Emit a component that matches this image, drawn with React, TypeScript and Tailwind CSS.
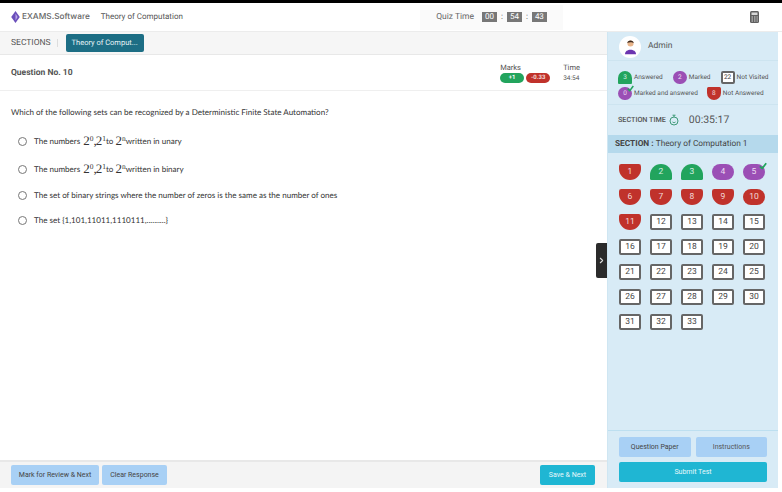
import { ChevronRight } from "lucide-react";

type Status = "notAnswered" | "answered" | "marked" | "markedAnswered" | "notVisited";

const shapes: Record<Status, string> = {
  notAnswered: "bg-[#c0322b] text-[#f3d9d7] rounded-t-[3px] rounded-b-[14px]",
  answered: "bg-[#22a45d] text-[#d8f0e3] rounded-t-[14px] rounded-b-[2px]",
  marked: "bg-[#9b4fb5] text-[#eedff3] rounded-full",
  markedAnswered: "bg-[#9b4fb5] text-[#eedff3] rounded-full",
  notVisited: "bg-white text-[#444] border-2 border-[#666] rounded-[2px]",
};

const questions: Status[] = [
  "notAnswered", "answered", "answered", "marked", "markedAnswered",
  "notAnswered", "notAnswered", "notAnswered", "notAnswered", "notAnswered",
  "notAnswered",
  ...Array<Status>(22).fill("notVisited"),
];

function Check({ className }: { className: string }) {
  return (
    <svg viewBox="0 0 10 10" className={className}>
      <path d="M1 5.5 L4 8 L9 1.5" fill="none" stroke="#22a45d" strokeWidth="2.2" />
    </svg>
  );
}

function QuestionButton({ n, status }: { n: number; status: Status }) {
  const tenth = n === 10;
  return (
    <div
      className={`relative flex h-4 w-[22px] items-center justify-center text-[8.5px] ${
        tenth ? "bg-[#c0322b] text-[#f3d9d7] rounded-full" : shapes[status]
      }`}
    >
      {n}
      {status === "markedAnswered" && <Check className="absolute -right-0.5 -top-0.5 h-2 w-2" />}
    </div>
  );
}

function Legend({ status, n, label }: { status: Status; n: number; label: string }) {
  return (
    <div className="flex items-center gap-[1px]">
      <div
        className={`relative flex h-[13px] w-[14px] items-center justify-center text-[6.5px] ${shapes[status]} ${
          status === "notVisited" ? "border" : ""
        }`}
      >
        {n}
        {status === "markedAnswered" && <Check className="absolute -right-0.5 -top-0.5 h-[7px] w-[7px]" />}
      </div>
      <span className="ml-[1px] text-[6.5px] text-[#555]">{label}</span>
    </div>
  );
}

function Two({ sup }: { sup: string }) {
  return (
    <span className="font-['Liberation_Serif',serif] text-[13px] leading-[14px] text-[#333]">
      2<sup className="-top-[4px] text-[7.5px]">{sup}</sup>
    </span>
  );
}

function Formula() {
  return (
    <span className="ml-[3px] inline-flex items-baseline font-['Liberation_Serif',serif] text-[13px] leading-[14px] text-[#333]">
      <Two sup="0" />
      <span className="mr-[-1px]">,</span>
      <Two sup="1" />
    </span>
  );
}

function Option({ children, className = "" }: { children: React.ReactNode; className?: string }) {
  return (
    <div className={`flex h-[14px] items-center gap-[7px] ${className}`}>
      <span className="h-[9px] w-[9px] rounded-full border border-[#777] bg-white" />
      <span className="flex items-center whitespace-nowrap font-['Lato',sans-serif] text-[8.05px] text-[#333]">
        {children}
      </span>
    </div>
  );
}

function Clock({ value }: { value: string }) {
  return <span className="bg-[#777] px-[3px] text-[8px] leading-[10px] text-white">{value}</span>;
}

function FooterButton({ label, className }: { label: string; className: string }) {
  return (
    <button className={`flex items-center justify-center rounded-[2px] text-[7px] ${className}`}>{label}</button>
  );
}

export default function App() {
  return (
    <div className="flex h-[492px] w-[782px] flex-col overflow-hidden bg-white font-['Roboto',sans-serif] text-[#444] [text-rendering:geometricPrecision]">
      <div className="h-[3px] w-full shrink-0 bg-black" />

      {/* top header */}
      <div className="flex h-[29px] shrink-0 items-center border-b border-[#ececec] pl-[10px] pr-[23px]">
        <div className="flex w-[410px] shrink-0 items-center">
          <svg viewBox="0 0 12 14" className="h-[12px] w-[11px]">
            <path d="M6 0 L11 7 L6 14 L1 7 Z" fill="#6b4fbb" />
            <path d="M6 3 L8.5 7 L6 11" fill="#b9a6e6" />
          </svg>
          <span className="ml-[1px] font-['Inter',sans-serif] text-[8.3px] font-medium text-[#666]">EXAMS.Software</span>
          <span className="ml-[11px] text-[8px] text-[#555]">Theory of Computation</span>
        </div>
        <div className="flex h-[25px] w-[143px] items-center justify-center gap-[2px] bg-[#fafafa]">
          <span className="mr-[6px] text-[8.5px] text-[#666]">Quiz Time</span>
          <Clock value="00" />
          <span className="mx-[2px] text-[8px]">:</span>
          <Clock value="54" />
          <span className="mx-[2px] text-[8px]">:</span>
          <Clock value="43" />
        </div>
        <svg viewBox="0 0 9 12" className="ml-auto h-[12px] w-[9px]">
          <rect width="9" height="12" rx="1.5" fill="#5f5f5f" />
          <rect x="1.5" y="1.5" width="6" height="2.5" fill="#d8d8d8" />
          <path d="M1.5 6 H3 M4 6 H5.5 M6.5 6 H7.8 M1.5 8 H3 M4 8 H5.5 M6.5 8 H7.8 M1.5 10 H3 M4 10 H5.5 M6.5 10 H7.8" stroke="#d8d8d8" strokeWidth="1" />
        </svg>
      </div>

      <div className="flex min-h-0 flex-1 pr-1">
        {/* left column */}
        <div className="flex min-w-0 flex-1 flex-col">
          <div className="flex h-[23px] shrink-0 items-center border-b border-[#e8e8e8] bg-[#f6f6f6] pl-[11px]">
            <span className="text-[8.5px] text-[#555]">SECTIONS</span>
            <span className="ml-[6px] h-[8px] w-px bg-[#ddd]" />
            <span className="ml-[8px] flex h-[18px] w-[78px] items-center justify-center rounded-[2px] bg-[#1d6e85] text-[7.5px] text-[#e8f4f7]">
              Theory of Comput...
            </span>
          </div>

          <div className="flex h-[36px] shrink-0 items-center border-b border-[#efefef] pl-[11px] pr-[27px]">
            <span className="mt-[2px] text-[8.5px] font-bold text-[#555]">Question No. 10</span>
            <div className="ml-auto flex flex-col">
              <span className="text-[7.5px] leading-[10px] text-[#555]">Marks</span>
              <div className="flex gap-[2px]">
                <span className="flex h-[10px] w-[24px] items-center justify-center rounded-full bg-[#22a45d] text-[6px] font-bold text-white">+1</span>
                <span className="flex h-[10px] w-[24px] items-center justify-center rounded-full bg-[#c0322b] text-[6px] font-bold text-[#f3d9d7]">-0.33</span>
              </div>
            </div>
            <div className="ml-[13px] flex flex-col">
              <span className="text-[7.5px] leading-[10px] text-[#555]">Time</span>
              <span className="text-[6.5px] leading-[10px] text-[#555]">34:54</span>
            </div>
          </div>

          <div className="relative min-h-0 flex-1 pl-[11px] pt-[15px]">
            <p className="font-['Lato',sans-serif] text-[8.05px] leading-[12px] text-[#333]">
              Which of the following sets can be recognized by a Deterministic Finite State Automation?
            </p>
            <div className="ml-[7px] mt-[16px] flex flex-col gap-[12px]">
              <Option className="mb-[2px]">
                The numbers <Formula />to&nbsp;<Two sup="n" />written in unary
              </Option>
              <Option>
                The numbers <Formula />to&nbsp;<Two sup="n" />written in binary
              </Option>
              <Option className="-mb-[1px]">The set of binary strings where the number of zeros is the same as the number of ones</Option>
              <Option>{"The set {1,101,11011,1110111,..........}"}</Option>
            </div>
            {/* panel toggle */}
            <div className="absolute right-0 top-[152px] flex h-[35px] w-[11px] items-center justify-center rounded-l-[2px] bg-[#2b2b2b]">
              <ChevronRight className="h-[9px] w-[9px] text-[#ddd]" strokeWidth={3} />
            </div>
          </div>

          <div className="mb-1 flex h-[28px] shrink-0 items-center gap-[3px] border-t-2 border-[#e8e8e8] bg-[#f4f4f4] pl-[11px] pr-[12px]">
            <FooterButton label="Mark for Review & Next" className="h-[20px] w-[88px] bg-[#a8d0f5] text-[#444]" />
            <FooterButton label="Clear Response" className="h-[20px] w-[65px] bg-[#a8d0f5] text-[#444]" />
            <FooterButton label="Save & Next" className="ml-auto h-[20px] w-[55px] bg-[#1fb6d3] text-[#e8f8fb]" />
          </div>
        </div>

        {/* right panel */}
        <div className="mb-1 flex w-[171px] shrink-0 flex-col border-l border-[#cfe6f2] bg-[#d8ebf6]">
          <div className="flex h-[29px] shrink-0 items-center border-b border-[#cde4f0] pl-[11px] pt-[1px]">
            <div className="flex h-[22px] w-[22px] items-center justify-center rounded-full bg-white">
              <svg viewBox="0 0 20 20" className="h-[17px] w-[17px]">
                <circle cx="10" cy="6.5" r="3.6" fill="#e8b48a" />
                <path d="M6.2 6 C6.2 2 13.8 2 13.8 6 C12 4.6 8 4.6 6.2 6 Z" fill="#3b2a20" />
                <path d="M3.5 19 C3.5 12 16.5 12 16.5 19 Z" fill="#6b35b0" />
              </svg>
            </div>
            <span className="ml-[7px] text-[8.5px] text-[#555]">Admin</span>
          </div>

          <div className="flex h-[43px] shrink-0 flex-col justify-center gap-[3px] pl-[10px] pt-[6px]">
            <div className="flex items-center gap-[10px]">
              <Legend status="answered" n={3} label="Answered" />
              <Legend status="marked" n={2} label="Marked" />
              <Legend status="notVisited" n={22} label="Not Visited" />
            </div>
            <div className="flex items-center gap-[9px]">
              <Legend status="markedAnswered" n={0} label="Marked and answered" />
              <Legend status="notAnswered" n={8} label="Not Answered" />
            </div>
          </div>

          <div className="flex h-[31px] shrink-0 items-center border-t border-[#cde4f0] pl-[10px]">
            <span className="text-[7.2px] font-medium text-[#555]">SECTION TIME</span>
            <svg viewBox="0 0 12 12" className="ml-[2px] h-[12px] w-[12px]">
              <circle cx="6" cy="7" r="4" fill="none" stroke="#3f9a78" strokeWidth="1" />
              <path d="M4.5 1.2 H7.5 M6 1.2 V3 M4.5 8 C5.2 8.8 6.8 8.8 7.5 8" fill="none" stroke="#3f9a78" strokeWidth="1" />
            </svg>
            <span className="ml-[9px] text-[10.5px] text-[#555]">00:35:17</span>
          </div>

          <div className="flex h-[18px] shrink-0 items-center bg-[#b5d9ec] pl-[7px] text-[8.3px] text-[#444]">
            <b className="font-bold">SECTION :</b>&nbsp;Theory of Computation 1
          </div>

          <div className="grid flex-1 grid-cols-[repeat(5,22px)] content-start gap-x-[9px] gap-y-[9px] pl-[11px] pt-[11px]">
            {questions.map((status, i) => (
              <QuestionButton key={i} n={i + 1} status={status} />
            ))}
          </div>

          <div className="flex shrink-0 flex-col gap-[5px] border-t border-[#bddff0] px-[11px] pb-[6px] pt-[6px]">
            <div className="flex gap-[5px]">
              <FooterButton label="Question Paper" className="h-[20px] flex-1 bg-[#a8d0f5] text-[#444]" />
              <FooterButton label="Instructions" className="h-[20px] flex-1 bg-[#a8d0f5] text-[#555]" />
            </div>
            <FooterButton label="Submit Test" className="h-[20px] w-full bg-[#1fb6d3] text-[#e8f8fb]" />
          </div>
        </div>
      </div>
    </div>
  );
}
